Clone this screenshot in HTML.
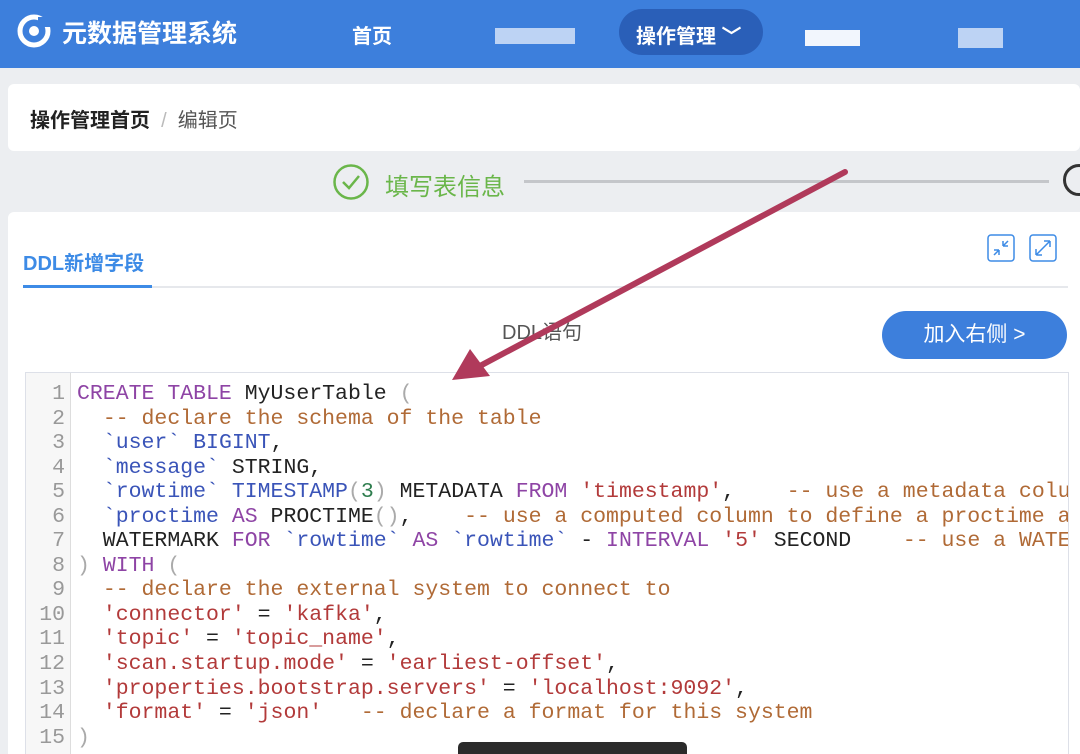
<!DOCTYPE html>
<html><head><meta charset="utf-8"><style>
html,body{margin:0;width:1080px;height:754px;overflow:hidden}
body{background:#eceef1;font-family:"Liberation Sans","Noto Sans CJK SC",sans-serif;position:relative}
.top{position:absolute;left:0;top:0;width:1080px;height:68px;background:#3d7fdc}
.t{position:absolute;color:#fff;font-weight:bold}
.card1{position:absolute;left:8px;top:84px;width:1072px;height:67px;background:#fff;border-radius:6px}
.card2{position:absolute;left:8px;top:212px;width:1072px;height:542px;background:#fff;border-radius:6px 0 0 0}
.code{position:absolute;left:25px;top:372px;width:1042px;height:382px;background:#fff;border:1px solid #dde0e8;border-bottom:none;overflow:hidden}
.gut{position:absolute;left:0;top:0;width:44px;height:400px;background:#f7f7f7;border-right:1px solid #ddd}
pre{margin:0;position:absolute;left:0;top:9px;font-family:"Liberation Mono",monospace;font-size:21.5px;line-height:24.55px;color:#222;white-space:pre}
.ln{color:#999;text-align:right;width:39px}
.k{color:#8e44a5}.c{color:#b06a36}.v{color:#3a54b8}.s{color:#b23a3a}.n{color:#2e7d4e}.p{color:#aaa}
</style></head><body>
<div class="top"></div>
<svg style="position:absolute;left:16px;top:13px" width="36" height="36" viewBox="0 0 36 36"><circle cx="18" cy="18" r="14" fill="none" stroke="#fff" stroke-width="5"/><circle cx="18" cy="18" r="5" fill="#fff"/><rect x="22" y="4" width="12" height="10" fill="#3d7fdc"/></svg>
<div class="t" style="left:62px;top:14px;font-size:25px">元数据管理系统</div>
<div class="t" style="left:352px;top:20px;font-size:20px">首页</div>
<div style="position:absolute;left:495px;top:28px;width:80px;height:16px;background:#dde8fa;opacity:.8"></div>
<div style="position:absolute;left:619px;top:9px;width:144px;height:46px;border-radius:23px;background:#2a5fb8"></div>
<div class="t" style="left:636px;top:20px;font-size:20px">操作管理 ﹀</div>
<div style="position:absolute;left:805px;top:30px;width:55px;height:16px;background:#f2f6fd"></div>
<div style="position:absolute;left:958px;top:28px;width:45px;height:20px;background:#dde8fa;opacity:.8"></div>
<div class="card1"></div>
<div style="position:absolute;left:30px;top:104px;font-size:20px;color:#222;font-weight:bold">操作管理首页 <span style="color:#bbb;font-weight:normal">&nbsp;/&nbsp;</span> <span style="color:#555;font-weight:normal">编辑页</span></div>
<svg style="position:absolute;left:332px;top:163px" width="38" height="38"><circle cx="19" cy="19" r="16.5" fill="none" stroke="#6ab64a" stroke-width="2.5"/><path d="M11 19 L17 25 L27 13" fill="none" stroke="#6ab64a" stroke-width="2.5"/></svg>
<div style="position:absolute;left:385px;top:167px;font-size:24px;color:#6ab64a">填写表信息</div>
<div style="position:absolute;left:524px;top:180px;width:525px;height:3px;background:#c4c6ca"></div>
<div style="position:absolute;left:1063px;top:164px;width:32px;height:32px;border:3px solid #333;border-radius:50%;box-sizing:border-box"></div>
<div class="card2"></div>
<div style="position:absolute;left:23px;top:247px;font-size:20px;color:#3d8be6;font-weight:bold">DDL新增字段</div>
<div style="position:absolute;left:23px;top:286px;width:1045px;height:2px;background:#e6e8ec"></div>
<div style="position:absolute;left:23px;top:285px;width:129px;height:3px;background:#3d8be6"></div>
<svg style="position:absolute;left:987px;top:234px" width="72" height="28"><rect x="1" y="1" width="26" height="26" rx="3" fill="none" stroke="#3d8be6" stroke-width="1.5"/><path d="M7 21 L12 16 M12 16 v5 M12 16 h-5 M21 7 L16 12 M16 12 v-5 M16 12 h5" stroke="#3d8be6" stroke-width="1.5" fill="none"/><rect x="43" y="1" width="26" height="26" rx="3" fill="none" stroke="#3d8be6" stroke-width="1.5"/><path d="M49 21 L63 7 M63 7 h-6 M63 7 v6 M49 21 h6 M49 21 v-6" stroke="#3d8be6" stroke-width="1.5" fill="none"/></svg>
<div style="position:absolute;left:502px;top:316px;font-size:20px;color:#555">DDL语句</div>
<div style="position:absolute;left:882px;top:311px;width:185px;height:48px;border-radius:24px;background:#3d7fdc;color:#fff;font-size:21px;line-height:48px;text-align:center">加入右侧 &gt;</div>
<div class="code"><div class="gut"></div>
<pre class="ln">1
2
3
4
5
6
7
8
9
10
11
12
13
14
15</pre>
<pre style="left:51px"><span class="k">CREATE TABLE</span> MyUserTable <span class="p">(</span>
  <span class="c">-- declare the schema of the table</span>
  <span class="v">`user`</span> <span class="v">BIGINT</span>,
  <span class="v">`message`</span> STRING,
  <span class="v">`rowtime`</span> <span class="v">TIMESTAMP</span><span class="p">(</span><span class="n">3</span><span class="p">)</span> METADATA <span class="k">FROM</span> <span class="s">'timestamp'</span>,    <span class="c">-- use a metadata column</span>
  <span class="v">`proctime</span> <span class="k">AS</span> PROCTIME<span class="p">()</span>,    <span class="c">-- use a computed column to define a proctime attribute</span>
  WATERMARK <span class="k">FOR</span> <span class="v">`rowtime`</span> <span class="k">AS</span> <span class="v">`rowtime`</span> - <span class="k">INTERVAL</span> <span class="s">'5'</span> SECOND    <span class="c">-- use a WATERMARK</span>
<span class="p">)</span> <span class="k">WITH</span> <span class="p">(</span>
  <span class="c">-- declare the external system to connect to</span>
  <span class="s">'connector'</span> = <span class="s">'kafka'</span>,
  <span class="s">'topic'</span> = <span class="s">'topic_name'</span>,
  <span class="s">'scan.startup.mode'</span> = <span class="s">'earliest-offset'</span>,
  <span class="s">'properties.bootstrap.servers'</span> = <span class="s">'localhost:9092'</span>,
  <span class="s">'format'</span> = <span class="s">'json'</span>   <span class="c">-- declare a format for this system</span>
<span class="p">)</span></pre></div>
<div style="position:absolute;left:458px;top:742px;width:229px;height:12px;background:#2b2b2b;border-radius:5px 5px 0 0"></div>
<svg style="position:absolute;left:0;top:0" width="1080" height="754"><path d="M845 172 L478 367" stroke="#b03a5b" stroke-width="6" stroke-linecap="round"/><path d="M452 380 L470 349 L490 376 Z" fill="#b03a5b"/></svg>
</body></html>
